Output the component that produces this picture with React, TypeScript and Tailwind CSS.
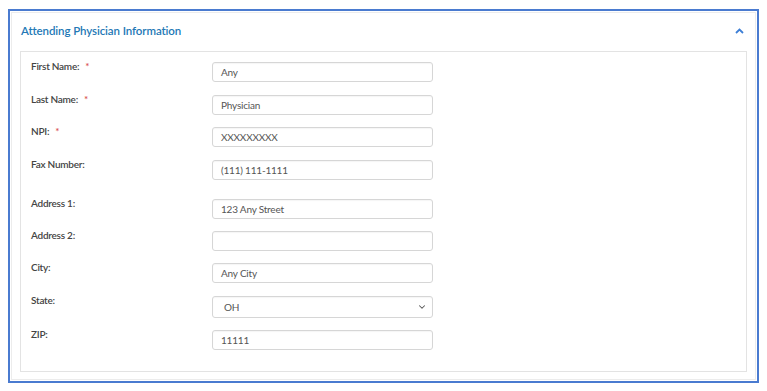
import { ChevronDown } from 'lucide-react';

interface Row {
  label: string;
  required?: boolean;
  value: string;
  gap: string;
  select?: boolean;
}

const rows: Row[] = [
  { label: 'First Name:', required: true, value: 'Any', gap: 'mt-0' },
  { label: 'Last Name:', required: true, value: 'Physician', gap: 'mt-[13px]' },
  { label: 'NPI:', required: true, value: 'XXXXXXXXX', gap: 'mt-[12px]' },
  { label: 'Fax Number:', value: '(111) 111-1111', gap: 'mt-[13px]' },
  { label: 'Address 1:', value: '123 Any Street', gap: 'mt-[19px]' },
  { label: 'Address 2:', value: '', gap: 'mt-[12px]' },
  { label: 'City:', value: 'Any City', gap: 'mt-[12px]' },
  { label: 'State:', value: 'OH', gap: 'mt-[13px]', select: true },
  { label: 'ZIP:', value: '11111', gap: 'mt-[12px]' },
];

export default function App() {
  return (
    <div className="w-[767px] h-[391px] bg-white pt-[9px] pl-[8px] font-['Lato',sans-serif]">
      <div className="w-[751px] h-[374px] border-2 border-[#4a7bd0] p-px">
        <div className="h-full border border-[#ececec] flex flex-col">
          <div className="h-[38px] flex items-center justify-between pl-[9px] pr-[11px] pb-[3px]">
            <div className="text-[11.5px] font-semibold text-[#2378b5] tracking-[-0.1px]">
              Attending Physician Information
            </div>
            <svg width="9" height="6" viewBox="0 0 9 6">
              <polyline points="1,5 4.5,1.5 8,5" fill="none" stroke="#3d7fd6" strokeWidth="1.8" />
            </svg>
          </div>
          <div className="mx-[8px] mb-[7px] flex-1 border border-[#e3e3e3] pt-[10px] pl-[10px]">
            {rows.map(r => (
              <div key={r.label} className={`flex items-start ${r.gap}`}>
                <div className="w-[181px] -mt-[3px] text-[10px] leading-[14px] text-[#444] font-semibold tracking-[-0.25px]">
                  {r.label}
                  {r.required && <span className="ml-[6px] text-[#d9534f]">*</span>}
                </div>
                {r.select ? (
                  <div className="w-[221px] h-[22px] border border-[#d6d6d6] rounded-[3px] flex items-center justify-between pl-[11px] pr-[5px] text-[10px] text-[#555] tracking-[-0.2px] shadow-[inset_0_1px_1px_rgba(0,0,0,0.04)]">
                    <span>{r.value}</span>
                    <ChevronDown size={10} strokeWidth={2.5} color="#555" />
                  </div>
                ) : (
                  <div className="w-[221px] h-[20px] border border-[#d6d6d6] rounded-[3px] flex items-center pl-[8px] text-[10px] text-[#555] tracking-[-0.2px] shadow-[inset_0_1px_1px_rgba(0,0,0,0.04)]">
                    {r.value}
                  </div>
                )}
              </div>
            ))}
          </div>
        </div>
      </div>
    </div>
  );
}
